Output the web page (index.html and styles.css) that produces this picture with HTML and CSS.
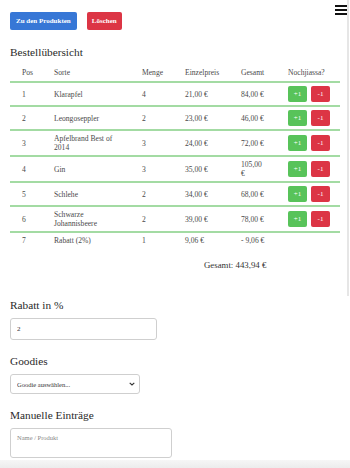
FILE: index.html
```html
<!DOCTYPE html>
<html lang="de">
<head>
<meta charset="utf-8">
<title>Bestellung</title>
<link rel="stylesheet" href="styles.css">
</head>
<body>
<div class="sideline"></div>
<button class="burger" aria-label="Menü"><span></span><span></span><span></span></button>
<main class="page">
  <div class="actions">
    <button class="btn btn-blue">Zu den Produkten</button>
    <button class="btn btn-red">Löschen</button>
  </div>
  <h2 class="title">Bestellübersicht</h2>
  <table class="orders">
    <colgroup>
      <col class="c-pos"><col class="c-sorte"><col class="c-menge"><col class="c-einzel"><col class="c-gesamt"><col class="c-act">
    </colgroup>
    <thead>
      <tr><th>Pos</th><th>Sorte</th><th>Menge</th><th>Einzelpreis</th><th>Gesamt</th><th>Nochjiassa?</th></tr>
    </thead>
    <tbody>
      <tr><td>1</td><td>Klarapfel</td><td>4</td><td>21,00 €</td><td>84,00 €</td><td><div class="pm"><button class="sm sm-g">+1</button><button class="sm sm-r">-1</button></div></td></tr>
      <tr><td>2</td><td>Leongoseppler</td><td>2</td><td>23,00 €</td><td>46,00 €</td><td><div class="pm"><button class="sm sm-g">+1</button><button class="sm sm-r">-1</button></div></td></tr>
      <tr><td>3</td><td>Apfelbrand Best of<br>2014</td><td>3</td><td>24,00 €</td><td>72,00 €</td><td><div class="pm"><button class="sm sm-g">+1</button><button class="sm sm-r">-1</button></div></td></tr>
      <tr><td>4</td><td>Gin</td><td>3</td><td>35,00 €</td><td>105,00<br>€</td><td><div class="pm"><button class="sm sm-g">+1</button><button class="sm sm-r">-1</button></div></td></tr>
      <tr><td>5</td><td>Schlehe</td><td>2</td><td>34,00 €</td><td>68,00 €</td><td><div class="pm"><button class="sm sm-g">+1</button><button class="sm sm-r">-1</button></div></td></tr>
      <tr><td>6</td><td>Schwarze<br>Johannisbeere</td><td>2</td><td>39,00 €</td><td>78,00 €</td><td><div class="pm"><button class="sm sm-g">+1</button><button class="sm sm-r">-1</button></div></td></tr>
      <tr class="last"><td>7</td><td>Rabatt (2%)</td><td>1</td><td>9,06 €</td><td>- 9,06 €</td><td></td></tr>
    </tbody>
  </table>
  <p class="total">Gesamt: 443,94 €</p>

  <h3 class="sec sec-first">Rabatt in %</h3>
  <input class="field f-rabatt" type="text" value="2">

  <h3 class="sec">Goodies</h3>
  <div class="selwrap">
    <select class="field f-select"><option>Goodie auswählen...</option></select>
    <svg class="chev" width="6" height="4" viewBox="0 0 6 4"><path d="M0.7 0.8 L3 3 L5.3 0.8" fill="none" stroke="#333" stroke-width="1.1"/></svg>
  </div>

  <h3 class="sec">Manuelle Einträge</h3>
  <textarea class="field f-text" placeholder="Name / Produkt"></textarea>
</main>
<div class="footshade"></div>
</body>
</html>
```

FILE: styles.css
```css
* { box-sizing: border-box; }
html, body { margin: 0; padding: 0; background: #fff; }
body {
  font-family: "Liberation Serif", "Times New Roman", serif;
  color: #222;
  width: 350px;
  height: 468px;
  overflow: hidden;
  position: relative;
  -webkit-font-smoothing: antialiased;
}
.sideline {
  position: absolute;
  top: 0;
  right: 1px;
  width: 2px;
  height: 296px;
  background: #e6e6e6;
}
.burger {
  position: absolute;
  top: 5px;
  right: 3px;
  width: 12px;
  height: 10px;
  padding: 0;
  border: 0;
  background: transparent;
  display: flex;
  flex-direction: column;
  justify-content: space-between;
}
.burger span { display: block; height: 2px; background: #111; }

.page { padding: 12px 10px 0 10px; }
.actions { display: flex; gap: 10px; }
.btn {
  font-family: inherit;
  font-weight: bold;
  font-size: 7px;
  height: 18px;
  line-height: 18px;
  padding: 0 6px;
  border: 0;
  border-radius: 2px;
  color: #fff;
}
.btn-blue { background: #3777d6; }
.btn-red { background: #dc3545; padding: 0 5px; }

.title {
  font-size: 11.3px;
  font-weight: normal;
  line-height: 14px;
  margin: 15px 0 4px 0;
  color: #2a2a2a;
}

.orders {
  width: 330px;
  border-collapse: collapse;
  table-layout: fixed;
  font-size: 7.6px;
  color: #4a4a4a;
}
.c-pos { width: 32px; }
.c-sorte { width: 88px; }
.c-menge { width: 43px; }
.c-einzel { width: 56px; }
.c-gesamt { width: 47px; }
.c-act { width: 64px; }
.orders th {
  font-weight: normal;
  text-align: left;
  padding: 5px 0 4px 12px;
  line-height: 9px;
  white-space: nowrap;
  border-bottom: 2px solid #a3dba3;
}
.orders td {
  padding: 3px 0 3px 12px;
  line-height: 9px;
  vertical-align: middle;
  white-space: nowrap;
  border-bottom: 2px solid #a3dba3;
}
.orders tr.last td { border-bottom: 0; }
.pm { display: flex; gap: 4px; }
.sm {
  font-family: inherit;
  font-size: 7px;
  height: 16px;
  width: 19px;
  padding: 0;
  border: 0;
  border-radius: 2px;
  color: #fff;
}
.sm-g { background: #58c35a; }
.sm-r { background: #dc3545; }

.total {
  margin: 12px 0 0 194px;
  font-size: 8.8px;
  line-height: 11px;
  color: #333;
}

.sec {
  font-size: 11.3px;
  font-weight: normal;
  line-height: 14px;
  margin: 14px 0 6px 0;
  color: #2a2a2a;
}
.sec-first { margin-top: 27px; }

.field {
  display: block;
  font-family: inherit;
  border: 1px solid #cfcfcf;
  border-radius: 3px;
  background: #fff;
  color: #333;
  font-size: 7px;
  padding: 0 6px;
  outline: none;
}
.f-rabatt { width: 147px; height: 22px; }
.selwrap { position: relative; width: 130px; }
.f-select {
  width: 130px;
  height: 20px;
  appearance: none;
  -webkit-appearance: none;
  font-size: 6.5px;
}
.chev { position: absolute; right: 5px; top: 8px; }
.f-text {
  width: 162px;
  height: 30px;
  resize: none;
  padding: 5px 6px;
  font-size: 6.5px;
  line-height: 8px;
}
.f-text::placeholder { color: #888; }

.footshade {
  position: absolute;
  left: 0;
  right: 0;
  bottom: 0;
  height: 8px;
  background: linear-gradient(#f6f6f6, #ececec);
}
```
